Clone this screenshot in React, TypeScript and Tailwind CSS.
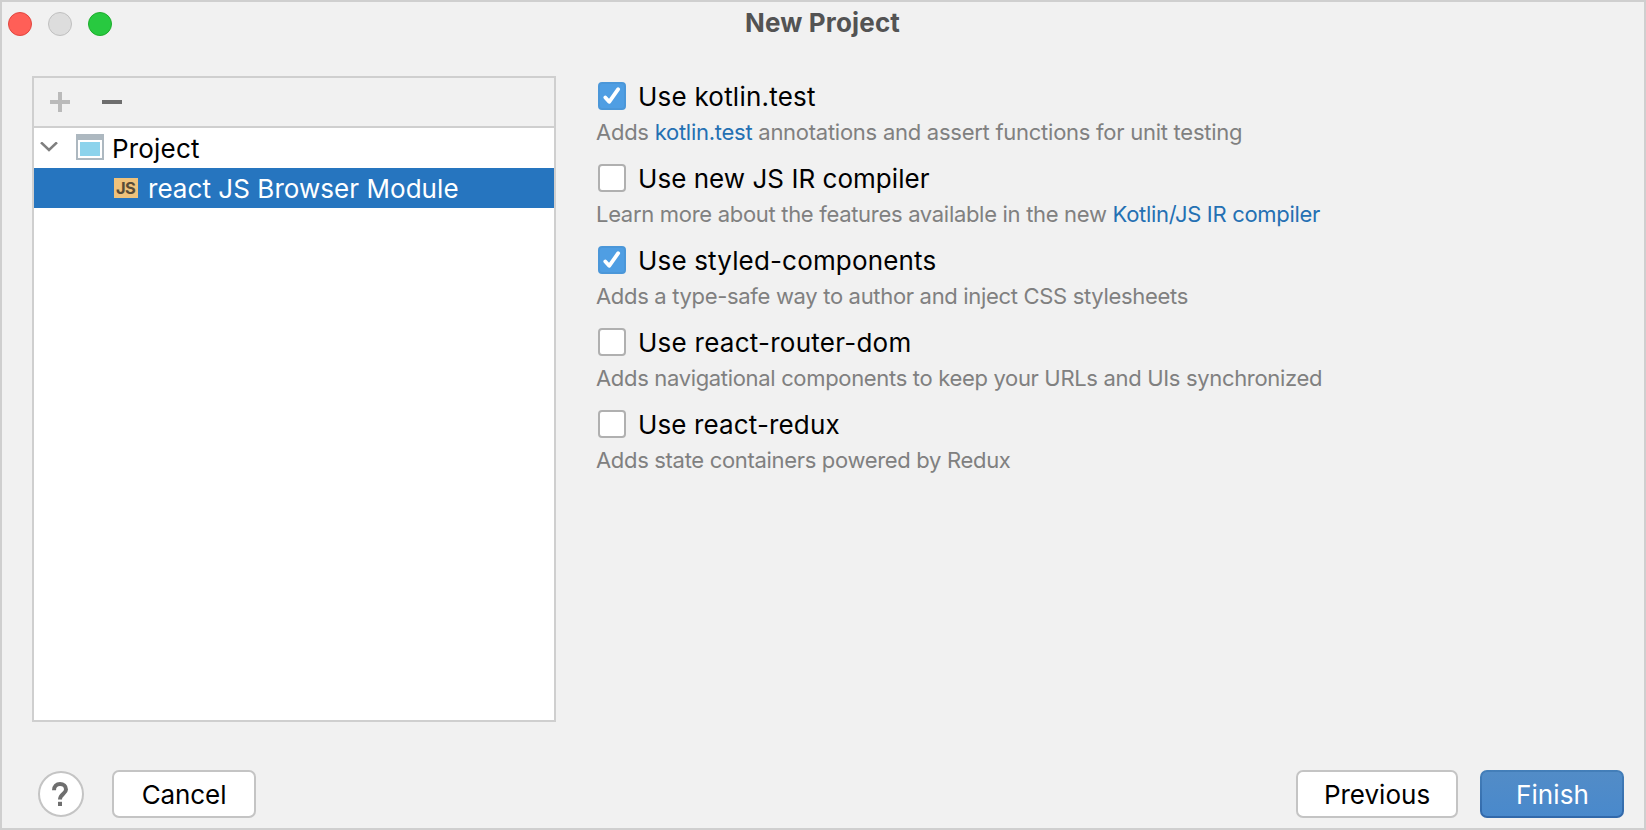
import type { ReactNode } from "react";
import clsx from "clsx";

type Option = {
  label: string;
  checked: boolean;
  labelSpacing: string;
  description: ReactNode;
  descriptionSpacing: string;
};

const options: Option[] = [
  {
    label: "Use kotlin.test",
    checked: true,
    labelSpacing: "tracking-[0.22px]",
    description: (
      <>
        Adds <Link>kotlin.test</Link> annotations and assert functions for unit testing
      </>
    ),
    descriptionSpacing: "tracking-[-0.26px]",
  },
  {
    label: "Use new JS IR compiler",
    checked: false,
    labelSpacing: "tracking-[0.036px]",
    description: (
      <>
        Learn more about the features available in the new <Link>Kotlin/JS IR compiler</Link>
      </>
    ),
    descriptionSpacing: "tracking-[-0.306px]",
  },
  {
    label: "Use styled-components",
    checked: true,
    labelSpacing: "tracking-[0.16px]",
    description: "Adds a type-safe way to author and inject CSS stylesheets",
    descriptionSpacing: "tracking-[-0.32px]",
  },
  {
    label: "Use react-router-dom",
    checked: false,
    labelSpacing: "tracking-[0.25px]",
    description: "Adds navigational components to keep your URLs and UIs synchronized",
    descriptionSpacing: "tracking-[-0.33px]",
  },
  {
    label: "Use react-redux",
    checked: false,
    labelSpacing: "tracking-[0.134px]",
    description: "Adds state containers powered by Redux",
    descriptionSpacing: "tracking-[-0.32px]",
  },
];

function Link({ children }: { children: ReactNode }) {
  return <a className="text-[#2470b3]">{children}</a>;
}

function Checkbox({ checked }: { checked: boolean }) {
  return (
    <span
      className={clsx(
        "block size-7 shrink-0 rounded-[4px] border-2",
        checked ? "border-[#4b97d9] bg-[#4f9ee3]" : "border-[#b0b0b0] bg-white"
      )}
    >
      {checked && (
        <svg viewBox="2 2 24 24" className="size-6" fill="none" stroke="white" strokeWidth="3.8" strokeLinecap="round" strokeLinejoin="round">
          <path d="M7.3 15.4 L11.2 19.8 L20.2 7.2" />
        </svg>
      )}
    </span>
  );
}

function TitleBar() {
  return (
    <header className="grid h-[41px] shrink-0 grid-cols-[1fr_auto_1fr] items-center">
      <div className="flex gap-4 pt-[3px] pl-1.5">
        <span className="size-6 rounded-full border border-[#e2463f] bg-[#ff5f57]" />
        <span className="size-6 rounded-full border border-[#c0c0c0] bg-[#dddddd]" />
        <span className="size-6 rounded-full border border-[#1dad2b] bg-[#28c940]" />
      </div>
      <h1 className="pr-px text-[26px] leading-[41px] font-bold tracking-[0.16px] text-[#535353]">New Project</h1>
    </header>
  );
}

function ModuleTree() {
  return (
    <section className="flex h-[646px] w-[524px] shrink-0 flex-col border-2 border-[#cfcfcf] bg-white">
      <div className="flex h-[50px] shrink-0 items-center gap-8 border-b-2 border-[#cfcfcf] bg-[#f1f1f1] pl-4">
        <svg viewBox="0 0 20 20" className="size-5" fill="#bababa">
          <path d="M8 0h4v8h8v4h-8v8H8v-8H0V8h8z" />
        </svg>
        <svg viewBox="0 0 20 20" className="size-5" fill="#6e6e6e">
          <path d="M0 8h20v4H0z" />
        </svg>
      </div>
      <div className="flex h-10 shrink-0 items-center">
        <svg viewBox="0 0 18 12" className="ml-1.5 h-3 w-[18px]" fill="none" stroke="#7f7f7f" strokeWidth="2.6">
          <path d="M1 0.4 L9 7.9 L17 0.4" />
        </svg>
        <svg viewBox="0 0 28 26" className="mb-0.5 ml-[18px] h-[26px] w-7" shapeRendering="crispEdges">
          <path fill="#adb8c0" d="M0 0h28v26H0z" />
          <path fill="#fff" d="M2 6h24v18H2z" />
          <path fill="#8cd3ec" d="M4 8h20v14H4z" />
        </svg>
        <span className="ml-2 pt-0.5 text-[26px] leading-10 tracking-[0.19px] text-black">Project</span>
      </div>
      <div className="flex h-10 shrink-0 items-center bg-[#2675bf] pl-20">
        <span className="flex h-5 w-6 items-center justify-center bg-[#efc27b] pr-px text-[16.5px] leading-5 font-bold tracking-[-0.6px] text-[#594c37]">
          JS
        </span>
        <span className="ml-2.5 pt-0.5 text-[26px] leading-10 tracking-[0.05px] text-white">react JS Browser Module</span>
      </div>
    </section>
  );
}

function OptionList() {
  return (
    <section className="flex flex-col gap-[19px] pt-1.5">
      {options.map((o) => (
        <div key={o.label} className="flex h-[63px] flex-col justify-between">
          <label className="flex h-7 gap-3 pl-0.5">
            <Checkbox checked={o.checked} />
            <span className={clsx("text-[26px] leading-[30px] whitespace-nowrap text-black", o.labelSpacing)}>{o.label}</span>
          </label>
          <p className={clsx("h-[26px] text-[22px] leading-[26px] whitespace-nowrap text-[#808080]", o.descriptionSpacing)}>
            {o.description}
          </p>
        </div>
      ))}
    </section>
  );
}

const plainButton = "h-12 rounded-[7px] border-2 border-[#c4c4c4] bg-white pt-0.5 text-[26px] leading-[42px] text-black";

function Footer() {
  return (
    <footer className="mt-auto mb-2.5 flex h-12 items-center pr-5 pl-9">
      <button
        className="flex size-[46px] items-center justify-center rounded-full border-2 border-[#c4c4c4] bg-white pr-0.5"
        aria-label="Help"
      >
        <svg viewBox="0 0 18 26" className="h-[26px] w-[18px]" fill="none" stroke="#6e6e6e" strokeWidth="4">
          <path d="M3 9.2 C3 5.4 5.5 3 9 3 C12.5 3 15 5.3 15 8.4 C15 12.6 9 13 9 18.6" />
          <path d="M9 20.8 V25" />
        </svg>
      </button>
      <button className={clsx(plainButton, "ml-7 w-36 tracking-[-0.09px]")}>Cancel</button>
      <button className={clsx(plainButton, "ml-auto w-[162px]")}>Previous</button>
      <button className="ml-[22px] h-12 w-36 rounded-[7px] bg-linear-to-b from-[#447fb9] to-[#3168aa] p-0.5 text-[26px] tracking-[0.1px] text-white">
        <span className="block h-11 rounded-[5px] bg-linear-to-b from-[#528cc7] to-[#4989cc] pt-0.5 pl-px leading-[42px]">Finish</span>
      </button>
    </footer>
  );
}

export default function App() {
  return (
    <main className="flex h-[830px] w-[1646px] flex-col overflow-hidden border-2 border-[#cfcfcf] bg-[#f1f1f1] font-['Inter',sans-serif]">
      <TitleBar />
      <div className="mt-[33px] flex pl-[30px]">
        <ModuleTree />
        <div className="pl-10">
          <OptionList />
        </div>
      </div>
      <Footer />
    </main>
  );
}
